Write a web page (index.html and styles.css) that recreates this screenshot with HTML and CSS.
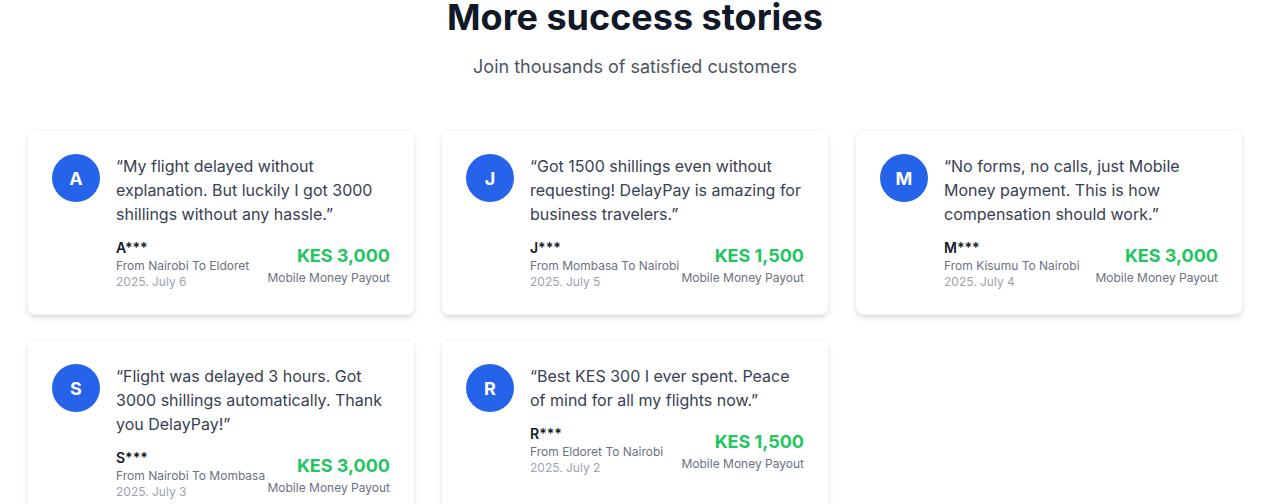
FILE: index.html
```html
<!DOCTYPE html>
<html lang="en">
<head>
    <meta charset="UTF-8">
    <meta name="viewport" content="width=device-width, initial-scale=1.0">
    <title>More success stories</title>
    <link rel="stylesheet" href="styles.css">
</head>
<body>
    <section class="stories">
        <h1>More success stories</h1>
        <p class="subtitle">Join thousands of satisfied customers</p>

        <div class="story-grid">
            <div class="story-card">
                <div class="avatar">A</div>
                <div class="story-body">
                    <p class="quote">“My flight delayed without explanation. But luckily I got 3000 shillings without any hassle.”</p>
                    <div class="story-meta">
                        <div>
                            <div class="name">A***</div>
                            <div class="route">From Nairobi To Eldoret</div>
                            <div class="date">2025. July 6</div>
                        </div>
                        <div class="payout">
                            <div class="amount">KES 3,000</div>
                            <div class="method">Mobile Money Payout</div>
                        </div>
                    </div>
                </div>
            </div>

            <div class="story-card">
                <div class="avatar">J</div>
                <div class="story-body">
                    <p class="quote">“Got 1500 shillings even without requesting! DelayPay is amazing for business travelers.”</p>
                    <div class="story-meta">
                        <div>
                            <div class="name">J***</div>
                            <div class="route">From Mombasa To Nairobi</div>
                            <div class="date">2025. July 5</div>
                        </div>
                        <div class="payout">
                            <div class="amount">KES 1,500</div>
                            <div class="method">Mobile Money Payout</div>
                        </div>
                    </div>
                </div>
            </div>

            <div class="story-card">
                <div class="avatar">M</div>
                <div class="story-body">
                    <p class="quote">“No forms, no calls, just Mobile Money payment. This is how compensation should work.”</p>
                    <div class="story-meta">
                        <div>
                            <div class="name">M***</div>
                            <div class="route">From Kisumu To Nairobi</div>
                            <div class="date">2025. July 4</div>
                        </div>
                        <div class="payout">
                            <div class="amount">KES 3,000</div>
                            <div class="method">Mobile Money Payout</div>
                        </div>
                    </div>
                </div>
            </div>

            <div class="story-card">
                <div class="avatar">S</div>
                <div class="story-body">
                    <p class="quote">“Flight was delayed 3 hours. Got 3000 shillings automatically. Thank you DelayPay!”</p>
                    <div class="story-meta">
                        <div>
                            <div class="name">S***</div>
                            <div class="route">From Nairobi To Mombasa</div>
                            <div class="date">2025. July 3</div>
                        </div>
                        <div class="payout">
                            <div class="amount">KES 3,000</div>
                            <div class="method">Mobile Money Payout</div>
                        </div>
                    </div>
                </div>
            </div>

            <div class="story-card">
                <div class="avatar">R</div>
                <div class="story-body">
                    <p class="quote">“Best KES 300 I ever spent. Peace of mind for all my flights now.”</p>
                    <div class="story-meta">
                        <div>
                            <div class="name">R***</div>
                            <div class="route">From Eldoret To Nairobi</div>
                            <div class="date">2025. July 2</div>
                        </div>
                        <div class="payout">
                            <div class="amount">KES 1,500</div>
                            <div class="method">Mobile Money Payout</div>
                        </div>
                    </div>
                </div>
            </div>
        </div>
    </section>
</body>
</html>
```

FILE: styles.css
```css
body {
    margin: 0;
    padding-right: 3px;
    font-family: Inter, "Noto Sans", sans-serif;
    background-color: #ffffff;
    color: #111827;
}
.stories {
    width: 1216px;
    margin: 0 auto;
    text-align: center;
}
h1 {
    margin: 0;
    font-size: 36px;
    line-height: 34px;
    font-weight: 700;
    color: #111827;
}
.subtitle {
    margin: 19px 0 0;
    font-size: 18px;
    line-height: 28px;
    color: #4b5563;
}
.story-grid {
    display: grid;
    grid-template-columns: repeat(3, 1fr);
    gap: 24px 26px;
    margin-top: 48px;
    text-align: left;
}
.story-card {
    display: flex;
    gap: 16px;
    padding: 24px;
    background-color: #ffffff;
    border: 1px solid #f3f4f6;
    border-radius: 8px;
    box-shadow: 0 4px 6px -1px rgba(0, 0, 0, 0.1), 0 2px 4px -2px rgba(0, 0, 0, 0.1);
}
.avatar {
    flex: none;
    width: 48px;
    height: 48px;
    border-radius: 50%;
    background-color: #2563eb;
    color: #ffffff;
    font-size: 18px;
    font-weight: 700;
    display: flex;
    align-items: center;
    justify-content: center;
}
.story-body {
    flex: 1;
}
.quote {
    margin: 0;
    font-size: 16px;
    line-height: 24px;
    color: #374151;
}
.story-meta {
    display: flex;
    justify-content: space-between;
    align-items: center;
    margin-top: 12px;
}
.name {
    font-size: 14px;
    line-height: 20px;
    font-weight: 600;
    color: #111827;
}
.route {
    font-size: 12px;
    line-height: 16px;
    color: #6b7280;
}
.date {
    font-size: 12px;
    line-height: 16px;
    color: #9ca3af;
}
.payout {
    text-align: right;
}
.amount {
    font-size: 18px;
    line-height: 28px;
    font-weight: 700;
    color: #22c55e;
}
.method {
    font-size: 12px;
    line-height: 16px;
    color: #6b7280;
}
```
